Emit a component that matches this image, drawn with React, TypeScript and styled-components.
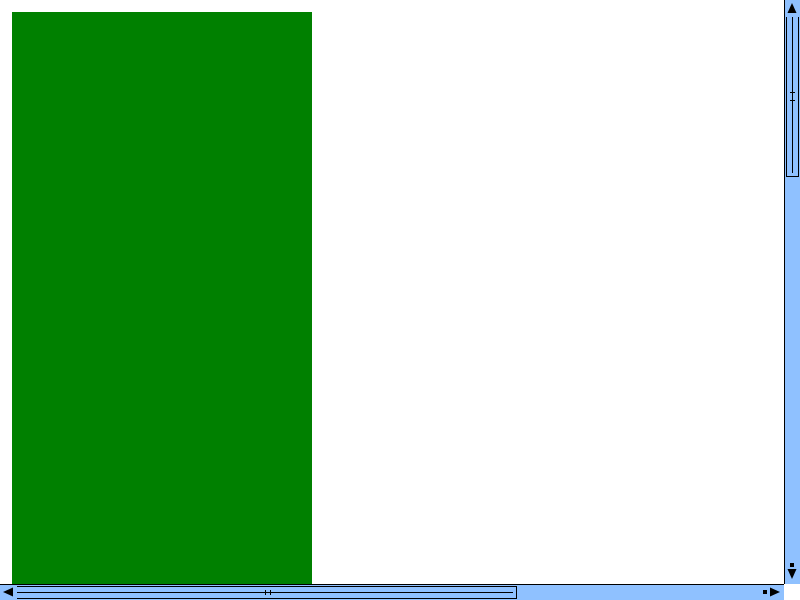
import styled, { createGlobalStyle } from "styled-components";

const GlobalStyle = createGlobalStyle`
  html, body {
    margin: 0;
    padding: 0;
    background: #ffffff;
    overflow: hidden;
  }
  body {
    font-family: "Liberation Sans", Arial, sans-serif;
  }
`;

const BAR = "#8fc1ff";

function Arrow({ dir }: { dir: "up" | "down" | "left" | "right" }) {
  const pts = {
    up: "8,3 12.5,13 3.5,13",
    down: "3.5,1 12.5,1 8,11",
    left: "3,8 13,3.5 13,12.5",
    right: "2,3.5 2,12.5 12,8",
  }[dir];
  return (
    <svg width="16" height="16" viewBox="0 0 16 16" style={{ overflow: "visible" }}>
      {dir === "down" && <rect x="6" y="-5" width="4" height="4" fill="#000" />}
      {dir === "right" && <rect x="-5" y="6" width="4" height="4" fill="#000" />}
      <polygon points={pts} fill="#000" />
    </svg>
  );
}

export default function App() {
  return (
    <>
      <GlobalStyle />
      <Frame>
        <Viewport>
          <Sidebar />
        </Viewport>
        <VBar>
          <VButton>
            <Arrow dir="up" />
          </VButton>
          <VThumb>
            <VGrip />
          </VThumb>
          <Spacer />
          <VButton>
            <Arrow dir="down" />
          </VButton>
        </VBar>
        <HBar>
          <HButton>
            <Arrow dir="left" />
          </HButton>
          <HThumb>
            <HGrip />
          </HThumb>
          <Spacer />
          <HButton>
            <Arrow dir="right" />
          </HButton>
        </HBar>
        <Corner />
      </Frame>
    </>
  );
}

const Frame = styled.div`
  display: grid;
  grid-template-columns: 784px 16px;
  grid-template-rows: 584px 16px;
  width: 800px;
  height: 600px;
`;

const Viewport = styled.div`
  overflow: hidden;
  padding: 12px 0 0 12px;
  box-sizing: border-box;
`;

const Sidebar = styled.aside`
  width: 300px;
  height: 2000px;
  background: #008000;
`;

const Spacer = styled.div`
  flex: 1;
`;

const VBar = styled.div`
  background: ${BAR};
  border-left: 1px solid #000;
  display: flex;
  flex-direction: column;
`;

const VButton = styled.div`
  height: 16px;
  flex: 0 0 16px;
  display: flex;
  justify-content: center;
  margin-left: -1px;
`;

const VThumb = styled.div`
  position: relative;
  flex: 0 0 160px;
  width: 13px;
  margin: 1px 0 0 1px;
  box-sizing: border-box;
  border: 1px solid #000;
  border-top: none;
  &::before {
    content: "";
    position: absolute;
    left: 5px;
    top: 0;
    bottom: 3px;
    width: 1px;
    background: #000;
  }
`;

const VGrip = styled.div`
  position: absolute;
  left: 3px;
  top: 75px;
  width: 5px;
  height: 9px;
  border-top: 1px solid #000;
  border-bottom: 1px solid #000;
  box-sizing: border-box;
`;

const HBar = styled.div`
  background: ${BAR};
  border-top: 1px solid #000;
  display: flex;
`;

const HButton = styled.div`
  width: 16px;
  flex: 0 0 16px;
  display: flex;
  align-items: center;
  margin-top: -1px;
`;

const HThumb = styled.div`
  position: relative;
  flex: 0 0 500px;
  height: 13px;
  margin: 1px 0 0 1px;
  box-sizing: border-box;
  border: 1px solid #000;
  border-left: none;
  &::before {
    content: "";
    position: absolute;
    top: 5px;
    left: 0;
    right: 3px;
    height: 1px;
    background: #000;
  }
`;

const HGrip = styled.div`
  position: absolute;
  top: 3px;
  left: 248px;
  width: 6px;
  height: 5px;
  border-left: 1px solid #000;
  border-right: 1px solid #000;
  box-sizing: border-box;
`;

const Corner = styled.div`
  background: #ffffff;
`;
